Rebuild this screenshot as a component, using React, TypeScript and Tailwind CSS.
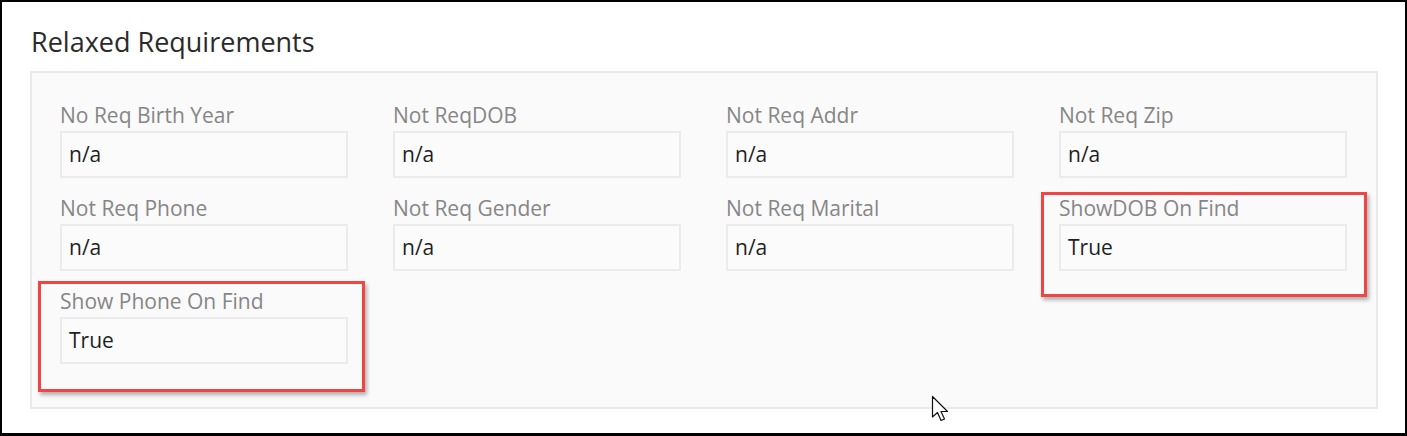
import React from "react";

type Field = { label: string; value: string; mark?: "a" | "b" };

const FIELDS: Field[] = [
  { label: "No Req Birth Year", value: "n/a" },
  { label: "Not ReqDOB", value: "n/a" },
  { label: "Not Req Addr", value: "n/a" },
  { label: "Not Req Zip", value: "n/a" },
  { label: "Not Req Phone", value: "n/a" },
  { label: "Not Req Gender", value: "n/a" },
  { label: "Not Req Marital", value: "n/a" },
  { label: "ShowDOB On Find", value: "True", mark: "a" },
  { label: "Show Phone On Find", value: "True", mark: "b" },
];

function Cursor() {
  return (
    <svg
      className="absolute left-[929px] top-[393px]"
      width="20"
      height="30"
      viewBox="0 0 20 30"
    >
      <path
        d="M1.5 1.5 L1.5 22 L6.5 17.5 L10 25.5 L13.5 24 L10 16.5 L16.5 16.5 Z"
        fill="#fff"
        stroke="#111"
        strokeWidth="1.2"
        strokeLinejoin="round"
      />
    </svg>
  );
}

function FieldCell({ field }: { field: Field }) {
  return (
    <div className="relative flex flex-col">
      {field.mark === "a" && (
        <div className="pointer-events-none absolute -left-[18px] -top-[4px] h-[105px] w-[326px] border-[3px] border-[#f04545] shadow-[2px_3px_4px_rgba(0,0,0,0.3)]" />
      )}
      {field.mark === "b" && (
        <div className="pointer-events-none absolute -left-[22px] -top-[8px] h-[111px] w-[327px] border-[3px] border-[#f04545] shadow-[2px_3px_4px_rgba(0,0,0,0.3)]" />
      )}
      <div className="h-[25px] text-[21px] leading-[25px] text-[#868686]">{field.label}</div>
      <div className="mt-[3px] flex h-[47px] items-center border-2 border-[#ebebeb] bg-[#fbfbfb] px-[7px] text-[21px] font-medium text-[#1f1f1f]">
        {field.value}
      </div>
    </div>
  );
}

export default function App() {
  return (
    <div
      className="relative h-[436px] w-[1407px] overflow-hidden border-t-2 border-r-2 border-b-[3px] border-l-2 border-black bg-white"
      style={{ fontFamily: "'Open Sans', 'Noto Sans', sans-serif" }}
    >
      <h2 className="ml-[29px] mt-[23px] h-[33px] text-[27px] leading-[33px] text-[#2b2b2b]">
        Relaxed Requirements
      </h2>
      <div className="ml-[28px] mr-[27px] mt-[13px] border-2 border-[#e9e9e9] bg-[#fafafa] pt-[30px] pr-[29px] pb-[43px] pl-[28px]">
        <div className="grid grid-cols-[repeat(4,288px)] gap-x-[45px] gap-y-[18px]">
          {FIELDS.map((f) => (
            <FieldCell key={f.label} field={f} />
          ))}
        </div>
      </div>
      <Cursor />
    </div>
  );
}
